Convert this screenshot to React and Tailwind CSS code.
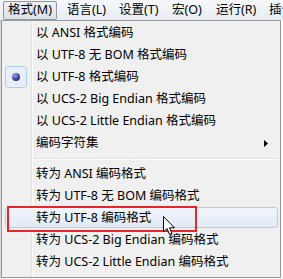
import React from "react";

const menus = [
  { label: "格式(M)", w: "w-[54px]" },
  { label: "语言(L)", w: "w-[52px]" },
  { label: "设置(T)", w: "w-[53px]" },
  { label: "宏(O)", w: "w-[44px]" },
  { label: "运行(R)", w: "w-[53px]" },
  { label: "插件(P)", w: "w-[53px]" },
];

const groupA = [
  { label: "以 ANSI 格式编码" },
  { label: "以 UTF-8 无 BOM 格式编码" },
  { label: "以 UTF-8 格式编码", checked: true },
  { label: "以 UCS-2 Big Endian 格式编码" },
  { label: "以 UCS-2 Little Endian 格式编码" },
  { label: "编码字符集", sub: true },
];

const groupB = [
  { label: "转为 ANSI 编码格式" },
  { label: "转为 UTF-8 无 BOM 编码格式" },
  { label: "转为 UTF-8 编码格式", hover: true },
  { label: "转为 UCS-2 Big Endian 编码格式" },
  { label: "转为 UCS-2 Little Endian 编码格式" },
];

function Row({ item }) {
  return (
    <div className="relative h-[22px] flex items-center">
      {item.hover && (
        <div className="absolute left-[3px] right-[2px] top-0 bottom-[1px] rounded-[3px] border border-[#aed1ea] bg-gradient-to-b from-[#f1f5fa] to-[#e1eaf5]" />
      )}
      {item.checked && (
        <div className="absolute left-[3px] top-0 w-[22px] h-[22px] rounded-[3px] border border-[#aed1ea] bg-[#e8eff8] flex items-center justify-center">
          <div className="w-[8px] h-[8px] rounded-full bg-[radial-gradient(circle_at_35%_30%,#9aa0e8,#2a2f8a_70%)]" />
        </div>
      )}
      <span className="relative pl-[34px] text-[12.5px] text-black whitespace-nowrap">{item.label}</span>
      {item.sub && (
        <svg className="absolute right-[12px] top-[8px]" width="4" height="7" viewBox="0 0 4 7">
          <path d="M0 0 L4 3.5 L0 7 Z" fill="#000" />
        </svg>
      )}
    </div>
  );
}

export default function App() {
  return (
    <div
      className="w-[283px] h-[279px] overflow-hidden bg-white relative"
      style={{ fontFamily: '"Noto Sans", "Noto Sans CJK SC", sans-serif' }}
    >
      <div className="h-[20px] flex items-center bg-gradient-to-b from-[#f6f8fb] to-[#e8edf3] text-[12.5px] text-black">
        {menus.map((m, i) => (
          <div
            key={m.label}
            className={
              i === 0
                ? `${m.w} shrink-0 ml-[3px] h-[19px] flex items-center justify-center border border-[#8e97a3] rounded-[2px] bg-gradient-to-b from-[#eef1f5] to-[#dbe1e9] whitespace-nowrap`
                : `${m.w} shrink-0 h-[19px] pl-[10px] flex items-center whitespace-nowrap`
            }
          >
            {m.label}
          </div>
        ))}
      </div>
      <div className="flex">
        <div className="w-[1px] bg-[#d6d6d6]" />
        <div className="relative w-[280px] h-[258px] border border-[#979797] bg-[#f0f0f0] py-[1px]">
          <div className="absolute left-[29px] top-0 bottom-0 w-[1px] bg-[#e2e3e3]" />
          <div className="absolute left-[30px] top-0 bottom-0 w-[1px] bg-white" />
          {groupA.map((it) => (
            <Row key={it.label} item={it} />
          ))}
          <div className="h-[9px] flex items-center">
            <div className="ml-[32px] mr-[1px] w-full">
              <div className="h-[1px] bg-[#e0e0e0]" />
              <div className="h-[1px] bg-white" />
            </div>
          </div>
          {groupB.map((it) => (
            <Row key={it.label} item={it} />
          ))}
        </div>
      </div>
      <div className="absolute left-[7px] top-[206px] w-[190px] h-[26px] border-2 border-[#e8252a]" />
      <svg className="absolute left-[163px] top-[216px]" width="13" height="20" viewBox="0 0 13 20">
        <path d="M0.5 0.5 L0.5 16 L4 12.5 L6.5 18.5 L9 17.5 L6.5 11.8 L11.5 11.8 Z" fill="#fff" stroke="#000" strokeWidth="1" strokeLinejoin="miter" />
      </svg>
    </div>
  );
}
